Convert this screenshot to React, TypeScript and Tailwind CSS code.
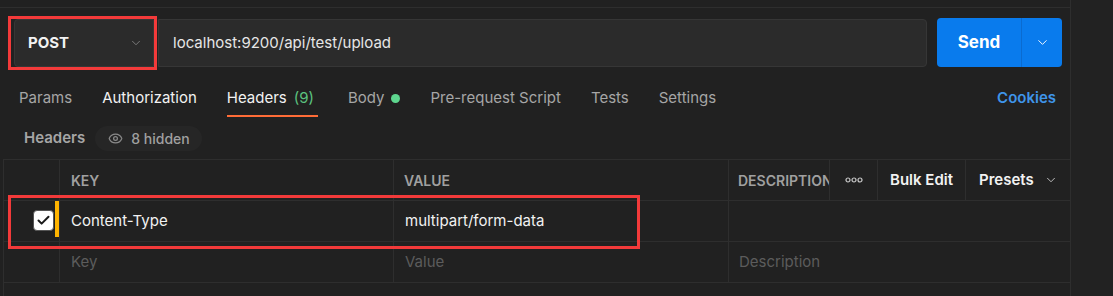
import { ChevronDown, Eye, Check } from "lucide-react";

const tabs = [
  { label: "Params", color: "text-[#a6a6a6]" },
  { label: "Authorization", color: "text-[#f2f2f2]" },
  { label: "Headers", color: "text-[#f2f2f2]", count: "(9)", active: true },
  { label: "Body", color: "text-[#a6a6a6]", dot: true },
  { label: "Pre-request Script", color: "text-[#a6a6a6]" },
  { label: "Tests", color: "text-[#a6a6a6]" },
  { label: "Settings", color: "text-[#a6a6a6]" },
];

function Dots() {
  return (
    <svg width="18" height="6" viewBox="0 0 18 6" fill="none" stroke="#c8c8c8" strokeWidth="1.2">
      <circle cx="3" cy="3" r="2" />
      <circle cx="9" cy="3" r="2" />
      <circle cx="15" cy="3" r="2" />
    </svg>
  );
}

export default function App() {
  return (
    <div
      className="flex h-[296px] w-[1113px] overflow-hidden bg-[#212121] text-[15px]"
      style={{ fontFamily: "Inter, 'Noto Sans', sans-serif" }}
    >
      <div className="relative w-[1071px] shrink-0 border-r border-[#2e2e2e]">
        <div className="h-[8px] border-b border-[#2e2e2e]" />

        {/* request row */}
        <div className="mt-[10px] flex items-end pl-[14px] pr-[8px]">
          <div className="flex h-[48px] w-[140px] items-center justify-between rounded-l-[4px] border border-[#363636] bg-[#2b2b2b] pl-[13px] pr-[10px]">
            <span className="font-bold text-[#f2f2f2]">POST</span>
            <ChevronDown size={14} strokeWidth={1.4} className="text-[#8a8a8a]" />
          </div>
          <div className="ml-[4px] flex h-[48px] flex-1 items-center rounded-r-[4px] border border-[#363636] bg-[#2b2b2b] pl-[14px] text-[#e6e6e6]">
            localhost:9200/api/test/upload
          </div>
          <div className="ml-[10px] flex h-[49px] w-[125px] overflow-hidden rounded-[4px] bg-[#097bed] text-white">
            <div className="flex w-[85px] items-center justify-center border-r border-[#0a6bd0] text-[17px] font-bold">
              Send
            </div>
            <div className="flex flex-1 items-center justify-center">
              <ChevronDown size={15} strokeWidth={1.5} />
            </div>
          </div>
        </div>

        {/* tabs */}
        <div className="mt-[13px] flex items-start pl-[19px] pr-[14px]">
          <div className="flex gap-[30px]">
            {tabs.map((t) => (
              <div
                key={t.label}
                className={`flex items-center gap-[7px] border-b-2 pb-[7px] pt-[8px] leading-[20px] ${
                  t.active ? "border-[#ff6c37] pr-[4px]" : "border-transparent"
                } ${t.color}`}
              >
                <span>{t.label}</span>
                {t.count && <span className="text-[#5bc27f]">{t.count}</span>}
                {t.dot && <span className="h-[9px] w-[9px] rounded-full bg-[#5ed68f]" />}
              </div>
            ))}
          </div>
          <div className="ml-auto pt-[8px] font-semibold leading-[20px] text-[#3f95ea]">Cookies</div>
        </div>

        {/* headers sub row */}
        <div className="mt-[9px] flex h-[25px] items-center pl-[24px]">
          <span className="font-semibold text-[#a6a6a6]">Headers</span>
          <div className="ml-[10px] flex h-[25px] items-center gap-[8px] rounded-full bg-[#262626] pl-[13px] pr-[12px] text-[14px] text-[#a0a0a0]">
            <Eye size={15} strokeWidth={2} className="text-[#8a8a8a]" />
            <span className="font-medium">8 hidden</span>
          </div>
        </div>

        {/* table */}
        <div className="ml-[3px] mt-[8px] border-l border-t border-[#2e2e2e] pb-[20px]">
          <div className="flex h-[41px] border-b border-[#2e2e2e] text-[14px] font-semibold">
            <div className="w-[56px] border-r border-[#2e2e2e]" />
            <div className="flex w-[334px] items-center border-r border-[#2e2e2e] pl-[11px] text-[#a0a0a0]">KEY</div>
            <div className="flex w-[335px] items-center border-r border-[#2e2e2e] pl-[10px] text-[#a0a0a0]">VALUE</div>
            <div className="flex w-[101px] items-center overflow-hidden whitespace-nowrap border-r border-[#2e2e2e] pl-[9px] text-[#a0a0a0]">
              DESCRIPTION
            </div>
            <div className="flex w-[48px] items-center justify-center border-r border-[#2e2e2e]">
              <Dots />
            </div>
            <div className="flex w-[88px] items-center justify-center border-r border-[#2e2e2e] text-[15px] text-[#f2f2f2]">
              Bulk Edit
            </div>
            <div className="flex flex-1 items-center gap-[10px] pl-[13px] text-[15px] text-[#f2f2f2]">
              Presets
              <ChevronDown size={14} strokeWidth={1.5} className="text-[#d0d0d0]" />
            </div>
          </div>

          <div className="flex h-[41px] border-b border-[#2e2e2e] text-[#f2f2f2]">
            <div className="flex w-[56px] items-start justify-end border-r border-[#2e2e2e]">
              <div className="mt-[9px] flex h-[21px] w-[21px] items-center justify-center rounded-[4px] border border-[#555] bg-white">
                <Check size={15} strokeWidth={3.2} className="text-[#1a1a1a]" />
              </div>
              <div className="ml-[1px] h-[36px] w-[4px] bg-[#ffb400]" />
            </div>
            <div className="flex w-[334px] items-center border-r border-[#2e2e2e] pl-[11px]">Content-Type</div>
            <div className="flex w-[335px] items-center border-r border-[#2e2e2e] pl-[11px]">multipart/form-data</div>
            <div className="flex-1" />
          </div>

          <div className="flex h-[41px] border-b border-[#2e2e2e] text-[#5c5c5c]">
            <div className="w-[56px] border-r border-[#2e2e2e]" />
            <div className="flex w-[334px] items-center border-r border-[#2e2e2e] pl-[11px]">Key</div>
            <div className="flex w-[335px] items-center border-r border-[#2e2e2e] pl-[11px]">Value</div>
            <div className="flex flex-1 items-center pl-[10px]">Description</div>
          </div>
        </div>

        {/* annotation boxes */}
        <div className="absolute left-[8px] top-[16px] h-[54px] w-[149px] border-[3px] border-[#f33a3a]" />
        <div className="absolute left-[8px] top-[195px] h-[54px] w-[632px] border-[3px] border-[#f33a3a]" />
      </div>
      <div className="flex-1 bg-[#222222]" />
    </div>
  );
}
